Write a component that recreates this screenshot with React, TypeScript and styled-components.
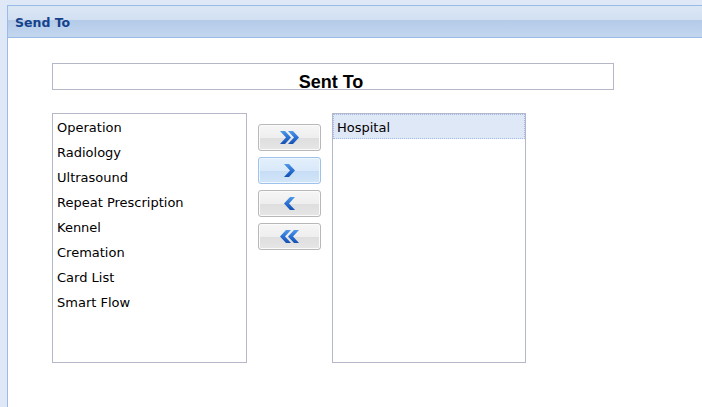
import React from "react";
import styled, { createGlobalStyle } from "styled-components";

const GlobalStyle = createGlobalStyle`
  html, body {
    margin: 0;
    padding: 0;
    background-color: #dfe8f6;
    font-family: "DejaVu Sans", Tahoma, sans-serif;
  }
`;

const Panel = styled.div`
  margin: 5px 0 0 7px;
  height: calc(100vh - 5px);
  box-sizing: border-box;
  border: 1px solid #99bbe8;
  border-right: none;
  border-bottom: none;
  display: flex;
  flex-direction: column;
`;

const PanelHeader = styled.div`
  height: 31px;
  border-bottom: 1px solid #99bbe8;
  background: linear-gradient(
    to bottom,
    #dce7f5 0%,
    #d2e0f2 45%,
    #b4cbe9 46%,
    #c3d6ef 100%
  );
  display: flex;
  align-items: center;
  padding-left: 7px;
`;

const PanelTitle = styled.span`
  font-family: "DejaVu Sans", Tahoma, sans-serif;
  font-weight: bold;
  font-size: 12.5px;
  color: #15428b;
  padding-top: 1px;
`;

const PanelBody = styled.div`
  flex: 1;
  background-color: #fff;
  padding: 25px 0 0 44px;
`;

const SentToBox = styled.div`
  box-sizing: border-box;
  width: 562px;
  height: 27px;
  border: 1px solid #b5b8c8;
  text-align: center;
`;

const SentToLabel = styled.div`
  padding-top: 8px;
  padding-right: 4px;
  font-family: "Liberation Sans", Arial, sans-serif;
  font-weight: bold;
  font-size: 18px;
  line-height: 20px;
  color: #000;
`;

const SelectorRow = styled.div`
  margin-top: 23px;
  display: flex;
  gap: 11px;
  align-items: flex-start;
`;

const ListBox = styled.div<{ $width: number }>`
  box-sizing: border-box;
  width: ${(p) => p.$width}px;
  height: 250px;
  border: 1px solid #b5b8c8;
  background: #fff;
  display: flex;
  flex-direction: column;
`;

const ListItem = styled.div<{ $selected?: boolean }>`
  height: 25px;
  box-sizing: border-box;
  padding: 2px 0 0 3px;
  border: 1px ${(p) => (p.$selected ? "dotted #a3bae9" : "solid transparent")};
  background: ${(p) => (p.$selected ? "#dfe8f6" : "transparent")};
  font-size: 13px;
  line-height: 25px;
  color: #000;
  white-space: nowrap;
  display: flex;
  align-items: center;
`;

const ButtonColumn = styled.div`
  padding-top: 11px;
  display: flex;
  flex-direction: column;
  gap: 6px;
`;

const MoveButton = styled.button<{ $active?: boolean }>`
  box-sizing: border-box;
  width: 63px;
  height: 27px;
  padding: 0;
  border-radius: 3px;
  border: 1px solid ${(p) => (p.$active ? "#9ec2ea" : "#b8b8b8")};
  background: ${(p) =>
    p.$active
      ? "linear-gradient(to bottom, #e3effb 0%, #d9e9fa 50%, #c6ddf5 52%, #d3e5f8 100%)"
      : "linear-gradient(to bottom, #f6f6f6 0%, #eeeeee 50%, #dedede 52%, #e6e6e6 100%)"};
  box-shadow: inset 0 0 0 1px ${(p) => (p.$active ? "#eef6fe" : "#fbfbfb")};
  display: flex;
  align-items: center;
  justify-content: center;
  cursor: pointer;
`;

const Chevron = ({ dir, double }: { dir: "left" | "right"; double?: boolean }) => {
  const one = (x: number) =>
    dir === "right"
      ? `${x},0 ${x + 5},0 ${x + 11},6.5 ${x + 5},13 ${x},13 ${x + 6},6.5`
      : `${x + 11},0 ${x + 6},0 ${x},6.5 ${x + 6},13 ${x + 11},13 ${x + 5},6.5`;
  const w = double ? 19 : 11;
  const id = `g-${dir}-${double ? 2 : 1}`;
  return (
    <svg width={w} height={13} viewBox={`0 0 ${w} 13`}>
      <defs>
        <linearGradient id={id} x1="0" y1="0" x2="0" y2="1">
          <stop offset="0" stopColor="#4f9ae8" />
          <stop offset="0.5" stopColor="#2a70d4" />
          <stop offset="1" stopColor="#1450b2" />
        </linearGradient>
      </defs>
      <polygon points={one(0)} fill={`url(#${id})`} />
      {double && <polygon points={one(8)} fill={`url(#${id})`} />}
    </svg>
  );
};

const available = [
  "Operation",
  "Radiology",
  "Ultrasound",
  "Repeat Prescription",
  "Kennel",
  "Cremation",
  "Card List",
  "Smart Flow",
];

const selected = ["Hospital"];

export default function App() {
  return (
    <>
      <GlobalStyle />
      <Panel>
        <PanelHeader>
          <PanelTitle>Send To</PanelTitle>
        </PanelHeader>
        <PanelBody>
          <SentToBox>
            <SentToLabel>Sent To</SentToLabel>
          </SentToBox>
          <SelectorRow>
            <ListBox $width={195}>
              {available.map((item) => (
                <ListItem key={item}>{item}</ListItem>
              ))}
            </ListBox>
            <ButtonColumn>
              <MoveButton title="Add all">
                <Chevron dir="right" double />
              </MoveButton>
              <MoveButton $active title="Add">
                <Chevron dir="right" />
              </MoveButton>
              <MoveButton title="Remove">
                <Chevron dir="left" />
              </MoveButton>
              <MoveButton title="Remove all">
                <Chevron dir="left" double />
              </MoveButton>
            </ButtonColumn>
            <ListBox $width={194}>
              {selected.map((item) => (
                <ListItem key={item} $selected>
                  {item}
                </ListItem>
              ))}
            </ListBox>
          </SelectorRow>
        </PanelBody>
      </Panel>
    </>
  );
}
